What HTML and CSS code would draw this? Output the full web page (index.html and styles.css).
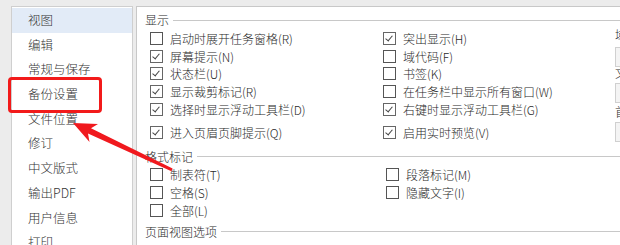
FILE: index.html
```html
<!DOCTYPE html>
<html lang="zh">
<head>
<meta charset="utf-8">
<link rel="stylesheet" href="styles.css">
</head>
<body>
<div class="dialog">
  <ul class="nav">
    <li class="active">视图</li>
    <li>编辑</li>
    <li>常规与保存</li>
    <li>备份设置</li>
    <li>文件位置</li>
    <li>修订</li>
    <li>中文版式</li>
    <li>输出PDF</li>
    <li>用户信息</li>
    <li>打印</li>
  </ul>
  <div class="content">
    <div class="group-title"><span>显示</span></div>
    <div class="grid">
      <div class="col">
        <label class="cb"><span class="box"></span>启动时展开任务窗格(R)</label>
        <label class="cb"><span class="box checked"></span>屏幕提示(N)</label>
        <label class="cb"><span class="box checked"></span>状态栏(U)</label>
        <label class="cb"><span class="box checked"></span>显示裁剪标记(R)</label>
        <label class="cb"><span class="box checked"></span>选择时显示浮动工具栏(D)</label>
        <label class="cb last"><span class="box checked"></span>进入页眉页脚提示(Q)</label>
      </div>
      <div class="col">
        <label class="cb"><span class="box checked"></span>突出显示(H)</label>
        <label class="cb"><span class="box"></span>域代码(F)</label>
        <label class="cb"><span class="box"></span>书签(K)</label>
        <label class="cb"><span class="box"></span>在任务栏中显示所有窗口(W)</label>
        <label class="cb"><span class="box checked"></span>右键时显示浮动工具栏(G)</label>
        <label class="cb last"><span class="box checked"></span>启用实时预览(V)</label>
      </div>
      <div class="side">
        <div class="side-label l1">域底纹(E):</div>
        <div class="side-input i1"></div>
        <div class="side-label l2">文本边界</div>
        <div class="side-input"></div>
        <div class="side-label l3">首选</div>
        <div class="side-input"></div>
      </div>
    </div>
    <div class="group-title second"><span>格式标记</span></div>
    <div class="grid fmt">
      <div class="col">
        <label class="cb"><span class="box"></span>制表符(T)</label>
        <label class="cb"><span class="box"></span>空格(S)</label>
        <label class="cb"><span class="box"></span>全部(L)</label>
      </div>
      <div class="col col2">
        <label class="cb"><span class="box"></span>段落标记(M)</label>
        <label class="cb"><span class="box"></span>隐藏文字(I)</label>
      </div>
    </div>
    <div class="group-title third"><span>页面视图选项</span></div>
  </div>
</div>
<div class="mark-box"></div>
<svg class="arrow" width="620" height="245" viewBox="0 0 620 245">
  <polygon fill="#f0191e" points="73,123 98,124 91,128.3 172.6,168.4 171.4,171.2 88,133.6 89.5,142"/>
</svg>
</body>
</html>
```

FILE: styles.css
```css
html, body {
  margin: 0;
  padding: 0;
}
body {
  width: 620px;
  height: 245px;
  overflow: hidden;
  background: #ececec;
  font-family: "Noto Sans CJK SC", "Noto Sans", sans-serif;
  font-size: 12px;
  font-weight: 300;
  color: #2a2a2a;
  position: relative;
}
.dialog {
  display: flex;
  gap: 3px;
  padding: 6px 0 0 11px;
  width: 800px;
}
.nav {
  list-style: none;
  margin: 0;
  padding: 1px 0 0 0;
  width: 120px;
  height: 300px;
  background: #fff;
  border: 1px solid #cfcfcf;
  flex: none;
}
.nav li {
  height: 24.7px;
  line-height: 24.7px;
  padding-left: 16px;
  color: #333;
  font-size: 12.5px;
}
.nav li.active {
  background: #e2ebf7;
}
.content {
  flex: none;
  width: 640px;
  height: 300px;
  background: #fff;
  border-left: 1px solid #c8c8c8;
  border-top: 1px solid #c8c8c8;
  padding: 5px 0 0 8px;
  box-sizing: border-box;
}
.group-title {
  display: flex;
  align-items: center;
  height: 16px;
  line-height: 16px;
  gap: 4px;
}
.group-title::after {
  content: "";
  flex: 1;
  height: 1px;
  background: #c8c8c8;
}
.group-title.second {
  margin-top: 7px;
}
.group-title.third {
  margin-top: 4px;
}
.grid {
  display: grid;
  grid-template-columns: 233px 232px 1fr;
  align-items: start;
  padding-left: 5px;
  margin-top: 2px;
}
.col {
  display: flex;
  flex-direction: column;
}
.cb {
  display: flex;
  align-items: center;
  height: 17.6px;
  white-space: nowrap;
  gap: 7px;
}
.cb.last {
  margin-top: 6px;
}
.box {
  width: 11px;
  height: 11px;
  border: 1px solid #555;
  background: #fff;
  flex: none;
  position: relative;
}
.box.checked {
  border-color: #666;
}
.box.checked::after {
  content: "";
  position: absolute;
  left: 3px;
  top: 1px;
  width: 3px;
  height: 6px;
  border-right: 1px solid #444;
  border-bottom: 1px solid #444;
  transform: rotate(40deg);
}
.side {
  margin-top: -3px;
  margin-bottom: -20px;
  display: flex;
  flex-direction: column;
  white-space: nowrap;
}
.side-label {
  height: 14px;
  line-height: 14px;
}
.side-label.l1 {
  margin-top: 1px;
}
.side-label.l2 {
  margin-top: -1px;
}
.side-label.l3 {
  margin-top: 2px;
}
.side-input {
  width: 120px;
  height: 18px;
  border: 1px solid #d0d0d0;
  background: #f4f4f4;
  margin-top: 3px;
}
.side-input.i1 {
  margin-top: 5px;
}
.fmt {
  margin-top: 1px;
}
.fmt .cb {
  height: 18px;
}
.col2 {
  padding-left: 3px;
}
.mark-box {
  position: absolute;
  left: 8px;
  top: 77px;
  width: 88px;
  height: 30px;
  border: 3px solid #f21a1a;
  border-radius: 4px;
}
.arrow {
  position: absolute;
  left: 0;
  top: 0;
}
```
